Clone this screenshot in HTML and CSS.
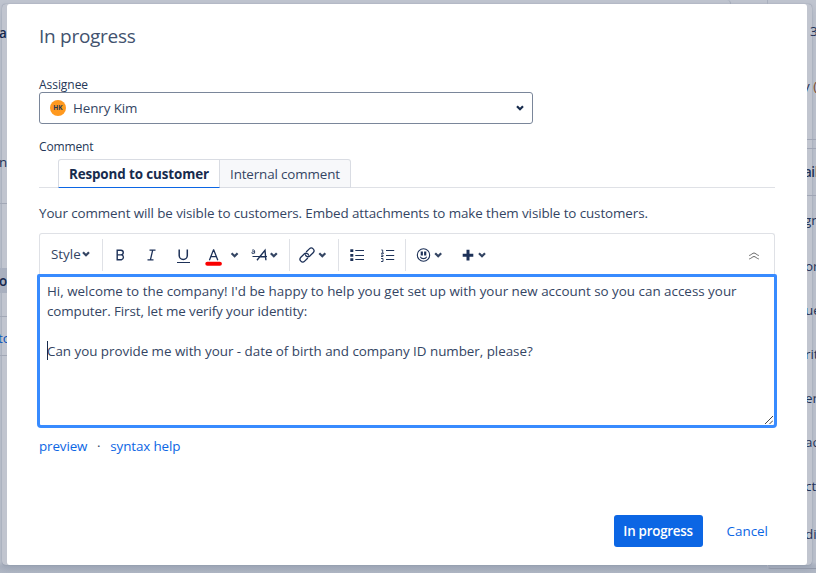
FILE: index.html
```html
<!DOCTYPE html>
<html lang="en">
<head>
<meta charset="utf-8">
<title>In progress</title>
<link rel="stylesheet" href="styles.css">
</head>
<body>
<div class="halo"></div>
<div class="page">
  <div class="page-left">
    <div class="l-row l1 strong">a</div>
    <div class="l-row l2">n</div>
    <div class="l-row l3"></div>
    <div class="l-row l4 strong">o</div>
    <div class="l-row l5"></div>
    <div class="l-row l6">to</div>
  </div>
  <div class="page-mid"></div>
  <div class="page-right">
    <div class="r-row r1">3</div>
    <div class="r-row r2"><span>y <i>(</i></span></div>
    <div class="r-gap"></div>
    <div class="details">
      <div class="r-row r-head">ail</div>
      <div class="r-row r3">gr</div>
      <div class="r-row">or</div>
      <div class="r-row">ue</div>
      <div class="r-row">rit</div>
      <div class="r-row">er</div>
      <div class="r-row">ac</div>
      <div class="r-row">ct</div>
      <div class="r-row r-last">di</div>
    </div>
  </div>
</div>
<main class="dialog">
  <h1>In progress</h1>
  <label class="label assignee-label">Assignee</label>
  <div class="select">
    <span class="avatar">HK</span><span class="name">Henry Kim</span>
    <svg class="chev" width="8" height="6" viewBox="0 0 8 6"><path d="M1 1.3 4 4.3 7 1.3"/></svg>
  </div>
  <label class="label comment-label">Comment</label>
  <div class="tabs">
    <div class="tab active"><span>Respond to customer</span></div>
    <div class="tab"><span>Internal comment</span></div>
  </div>
  <p class="hint">Your comment will be visible to customers. Embed attachments to make them visible to customers.</p>
  <div class="toolbar">
    <div class="group g-style"><span class="style-text">Style</span><svg class="chev" width="8" height="6" viewBox="0 0 8 6"><path d="M1 1.3 4 4.3 7 1.3"/></svg></div>
    <div class="group g-format">
      <svg width="187" height="24" viewBox="0 0 187 24">
        <g class="ink">
          <path d="M14.200 7.200h3.700a2.300 2.300 0 0 1 0 4.700h-3.700zM14.200 11.900h4.200a2.500 2.500 0 0 1 0 4.900h-4.200z" stroke-width="1.400"/>
          <path d="M46.500 7.200h6M44.500 16.800h6M49.700 7.200l-2.300 9.600" stroke-width="1.300"/>
          <path d="M76.200 6.500v5.900a4 4 0 0 0 8.100 0V6.500" stroke-width="1.500"/>
          <path d="M74 19.500h13" stroke-width="1"/>
          <path d="M106.400 17.200 110.500 6.800h.2l4.100 10.400M107.800 13.700h5.600" stroke-width="1.300"/>
          <path d="m128.600 10.300 3 3 3-3M167.800 10.300l3 3 3-3" class="arrow"/>
          <path d="m154 17.200 8-10 .9 10M156.700 13.700h5.800" stroke-width="1.400"/>
          <path d="M149 7.400c.8-.7 2.600-.8 2.600.7v2.400M151.600 8.700c-2-.1-2.800.3-2.800 1.100 0 1.200 2.100.9 2.800-.2" stroke-width=".9"/>
          <path d="M149.500 13.500h14.500" stroke-width="1"/>
        </g>
        <path d="M104.300 20.800h12.600" stroke="#f90000" stroke-width="4" stroke-linecap="round"/>
      </svg>
    </div>
    <div class="group g-link">
      <svg width="48" height="24" viewBox="0 0 48 24"><g class="ink">
        <g transform="translate(17 12) rotate(-45)" stroke-width="1.300">
          <path d="M1.500-2.700H6a2.700 2.700 0 0 1 0 5.400H1.300A2.700 2.700 0 0 1-.8-1.600"/>
          <path d="M-1.500 2.700H-6a2.700 2.700 0 0 1 0-5.400H-1.300A2.700 2.700 0 0 1 .8 1.600"/>
        </g>
        <path d="m29.300 10.300 3 3 3-3" class="arrow"/></g></svg>
    </div>
    <div class="group g-list">
      <svg width="66" height="24" viewBox="0 0 66 24"><g class="ink">
        <path d="M16.300 7.500h8.700M16.300 12.500h8.700M16.300 16.500h8.700M47 7.500h8.200M47 12.500h8.200M47 16.500h8.200" stroke-width="1.100"/>
        <path d="M11.300 7.700h3M11.300 12.300h3M11.300 16.700h3" stroke-width="2.800"/>
        <path d="M42.300 7h1.400v3M42 10.300h3M42 12h2v1.500h-2M42 15.500h2v3h-2" stroke-width=".9"/>
      </g></svg>
    </div>
    <div class="group g-insert">
      <svg width="90" height="24" viewBox="0 0 90 24"><g class="ink">
        <circle cx="17.500" cy="12" r="6.200" stroke-width="1.100"/>
        <path d="M15.800 8.500v4M19.200 8.500v4" stroke-width="2.200"/>
        <path d="M14.300 13.700c1.200 2.600 5.200 2.600 6.400 0" stroke-width="1.100"/>
        <path d="m29.200 10.300 3 3 3-3M73 10.300l3 3 3-3" class="arrow"/>
        <path d="M62 6.800v10.700M56.700 12.200h10.600" stroke-width="3"/>
      </g></svg>
    </div>
    <svg class="collapse" width="12" height="8" viewBox="0 0 12 8"><path d="M1.200 3.500C3.200 3 4.600 1 6 1s2.800 2 4.800 2.500M1.200 7C3.200 6.500 4.600 4.500 6 4.500S8.800 6.500 10.800 7"/></svg>
  </div>
  <div class="editor">
    <div class="line e1">Hi, welcome to the company! I'd be happy to help you get set up with your new account so you can access your</div>
    <div class="line e2">computer. First, let me verify your identity:</div>
    <div class="line"></div>
    <div class="line e3"><i class="caret"></i>Can you provide me with your - date of birth and company ID number, please?</div>
    <svg class="grip" width="8" height="8" viewBox="0 0 8 8"><path d="M0 8 8 0M4.500 8 8 4.500"/></svg>
  </div>
  <div class="links"><a class="k1">preview</a><span class="dot">·</span><a class="k2">syntax help</a></div>
  <div class="actions"><button class="primary"><span>In progress</span></button><a class="cancel">Cancel</a></div>
</main>
</body>
</html>
```
FILE: styles.css
```css
* { box-sizing: border-box; }
body {
  margin: 0; width: 816px; height: 573px; overflow: hidden; position: relative;
  background: linear-gradient(#bfc4cf 0 562px, #adb4c2 566px, #b2b9c6);
  color: #344563;
  font: 13.4px/20px "Open Sans", "Noto Sans", sans-serif;
}
.page { position: relative; display: grid; grid-template-columns: 7px 724px 36px 49px; height: 573px; }
.page-left, .page-right { overflow: hidden; white-space: nowrap; color: #1f3358; }
.l-row { display: flex; align-items: center; }
.l1 { height: 65px; }
.l2 { height: 139px; padding: 56px 0 0; text-indent: -1px; border-bottom: 1px solid #a2a8b6; }
.l3 { height: 64px; }
.l4 { height: 25px; background: #a9b0bf; }
.l5 { height: 24px; border-bottom: 1px solid #a2a8b6; }
.l6 { height: 39px; border-bottom: 1px solid #a2a8b6; color: #0b51b9; padding-top: 3px; text-indent: -2px; }
.strong { font-weight: 600; color: #14284d; text-indent: -1px; }
.page-mid { border-right: 1px solid #a3a9b8; height: 12px; border-radius: 0 4px 0 0; }
.page-right { grid-column: 4; border-left: 1px solid #a9afbd; height: 569px; border-bottom: 1px solid #9198a8; border-radius: 0 0 0 4px; }
.r-row { height: 44px; padding-left: 37px; display: flex; align-items: center; }
.r1 { height: 61px; padding-left: 42px; }
.r2 { height: 79px; padding: 0 0 28px 35px; border-bottom: 1px solid #a0a6b5; }
.r2 i { font-style: normal; color: #7b4a2f; }
.r-gap { height: 8px; }
.details { border-top: 1px solid #a0a6b5; font-weight: 500; }
.r-head { height: 47px; padding-left: 36px; border-bottom: 1px solid #a0a6b5; font-weight: 600; letter-spacing: -.4px; }
.r3 { height: 48px; padding-left: 36px; }
.r-last { height: 51px; }
.halo { position: absolute; left: 2px; top: 4px; width: 810px; height: 561px; border-radius: 4px; background: #c1c5cf; box-shadow: 0 0 1px rgba(9, 30, 66, .4), 0 4px 8px rgba(9, 30, 66, .12); }
.dialog { position: absolute; left: 7px; top: 4px; width: 800px; height: 561px; padding: 20px 32px 0; background: #fff; border-radius: 3px; display: flex; flex-direction: column; }
h1 { margin: 0; font-size: 19px; font-weight: 400; line-height: 24px; letter-spacing: -.28px; color: #42526e; }
.label { font-size: 12px; line-height: 16px; color: #253858; }
.assignee-label { margin-top: 29px; height: 15px; letter-spacing: -.05px; }
.select { width: 494px; height: 32px; border: 1px solid #7a869a; border-radius: 3px; display: flex; align-items: center; padding: 0 8px 0 10px; }
.avatar { width: 16px; height: 16px; border-radius: 50%; background: #ff991f; color: #253858; font-size: 6.5px; font-weight: 700; line-height: 16px; text-align: center; }
.name { margin-left: 7px; letter-spacing: -.1px; }
.select .chev { margin-left: auto; stroke: #172b4d; }
.chev { fill: none; stroke: #344563; stroke-width: 2.2; }
.comment-label { margin-top: 15px; height: 20px; letter-spacing: -.15px; }
.tabs { height: 29px; padding-left: 19px; display: flex; border-bottom: 1px solid #dfe1e6; }
.tab { height: 29px; width: 131px; border: 1px solid #d9dce3; border-left: 0; border-radius: 0 3px 0 0; background: #f7f8fa; text-align: center; line-height: 28px; white-space: nowrap; letter-spacing: -.13px; }
.tab.active { width: 162px; border-left: 1px solid #d9dce3; border-radius: 3px 0 0; border-bottom-color: #0c66e4; background: #fff; font-weight: 700; color: #172b4d; letter-spacing: -.1px; }
.hint { margin: 15px 0 10px; white-space: nowrap; letter-spacing: -.095px; }
.toolbar { height: 42px; border: 1px solid #dfe1e6; border-bottom: 0; border-radius: 3px 3px 0 0; display: flex; align-items: center; }
.group { height: 32px; display: flex; align-items: center; border-right: 1px solid #dfe1e6; }
.g-style { width: 63px; padding: 0 0 2px 11px; gap: 1px; height: 32px; }
.g-format { width: 187px; }
.g-link { width: 49px; }
.g-list { width: 67px; }
.g-insert { border: 0; }
.group svg { flex: none; }
.ink { fill: none; stroke: #1d3158; }
.arrow { stroke: #344563; stroke-width: 2.2; }
.collapse { margin: 2px 14px 0 auto; fill: none; stroke: #666; stroke-width: 1; }
.editor { position: relative; width: 740px; height: 154px; margin: -1px 0 0 -2px; padding: 4px 7px; border: 3px solid #388bff; border-radius: 2px 2px 4px 4px; background: #fff; white-space: nowrap; }
.line { height: 20px; }
.e2 { letter-spacing: -.1px; }
.e3 { letter-spacing: -.025px; }
.caret { position: absolute; left: 7px; top: 64px; width: 1px; height: 19px; background: #172b4d; }
.grip { position: absolute; right: 1px; bottom: 1px; stroke: #444; }
.links { margin-top: 8px; height: 20px; display: flex; color: #0c66e4; letter-spacing: -.12px; }
.dot { width: 23px; text-align: center; color: #344563; }
.actions { margin-top: 59px; display: flex; justify-content: flex-end; align-items: center; padding-right: 7px; }
.primary { width: 89px; height: 32px; padding: 0; border: 0; border-radius: 3px; background: #0c66e4; color: #fff; font: 600 13.4px/32px "Open Sans", sans-serif; letter-spacing: -.25px; margin-right: 24px; white-space: nowrap; }
.cancel { color: #0c66e4; }
```
